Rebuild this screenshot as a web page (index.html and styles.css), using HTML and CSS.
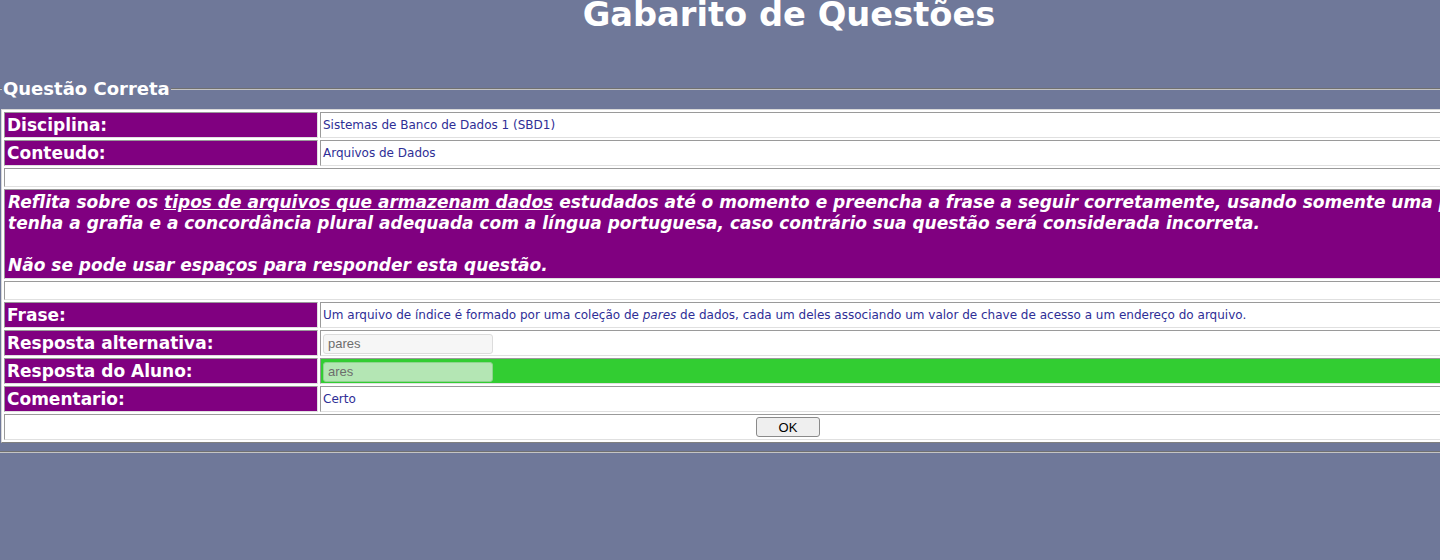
FILE: index.html
```html
<!DOCTYPE html>
<html lang="pt-BR">
<head>
<meta charset="utf-8">
<title>Gabarito de Questões</title>
<link rel="stylesheet" href="styles.css">
</head>
<body>
<div class="page">
  <h1 class="title">Gabarito de Questões</h1>
  <fieldset class="box">
    <legend class="box-legend">Questão Correta</legend>
    <table class="grid">
      <tr>
        <td class="label">Disciplina:</td>
        <td class="value">Sistemas de Banco de Dados 1 (SBD1)</td>
      </tr>
      <tr>
        <td class="label">Conteudo:</td>
        <td class="value">Arquivos de Dados</td>
      </tr>
      <tr><td class="spacer" colspan="2">&nbsp;</td></tr>
      <tr>
        <td class="statement" colspan="2">Reflita sobre os <u>tipos de arquivos que armazenam dados</u> estudados até o momento e preencha a frase a seguir corretamente, usando somente uma palavra que tenha a grafia e a concordância plural adequada com a língua portuguesa, caso contrário sua questão será considerada incorreta.<br><br>Não se pode usar espaços para responder esta questão.</td>
      </tr>
      <tr><td class="spacer" colspan="2">&nbsp;</td></tr>
      <tr>
        <td class="label">Frase:</td>
        <td class="value">Um arquivo de índice é formado por uma coleção de <i>pares</i> de dados, cada um deles associando um valor de chave de acesso a um endereço do arquivo.</td>
      </tr>
      <tr>
        <td class="label">Resposta alternativa:</td>
        <td class="value"><input class="field" type="text" value="pares" disabled></td>
      </tr>
      <tr>
        <td class="label">Resposta do Aluno:</td>
        <td class="value ok-cell"><input class="field field-ok" type="text" value="ares" disabled></td>
      </tr>
      <tr>
        <td class="label">Comentario:</td>
        <td class="value">Certo</td>
      </tr>
      <tr>
        <td class="actions" colspan="2"><button class="btn" type="button">OK</button></td>
      </tr>
    </table>
  </fieldset>
</div>
</body>
</html>
```

FILE: styles.css
```css
html, body {
  margin: 0;
  padding: 0;
  overflow: hidden;
  background: #6f7899;
}

.page {
  width: 1578px;
  font-family: "DejaVu Sans", Verdana, sans-serif;
}

.title {
  margin: -5px 0 0 0;
  text-align: center;
  color: #ffffff;
  font-size: 33.7px;
  line-height: 40px;
  font-weight: bold;
}

.box {
  margin: 44px 0 0 0;
  padding: 0 0 8px 2px;
  border: 2px groove #c4c4c4;
  border-left: none;
  border-right: none;
}

.box-legend {
  padding: 0 1px;
  margin-left: 0;
  color: #ffffff;
  font-size: 18px;
  font-weight: bold;
  line-height: 20px;
}

.grid {
  width: 1574px;
  border-collapse: separate;
  border-spacing: 2px;
  border: 1px solid;
  border-color: #d8d8d8 #808080 #808080 #d8d8d8;
  background: #ffffff;
  margin: 10px 0 0 -1px;
}

.grid td {
  border: 1px solid;
  border-color: #9a9a9a #e0e0e0 #e0e0e0 #9a9a9a;
  padding: 1px 2px;
}

.label {
  width: 308px;
  background: #800080;
  color: #ffffff;
  font-size: 17px;
  font-weight: bold;
  line-height: 22px;
}

.value {
  background: #ffffff;
  color: #2e2e96;
  font-size: 12px;
  line-height: 22px;
}

.ok-cell {
  background: #32cd32;
}

.spacer {
  background: #ffffff;
  font-size: 11px;
  line-height: 15px;
}

.statement {
  background: #800080;
  color: #ffffff;
  font-size: 17px;
  font-weight: bold;
  font-style: italic;
  line-height: 21px;
  padding: 2px 3px 2px 3px !important;
}

.field {
  width: 170px;
  height: 20px;
  box-sizing: border-box;
  margin: 0;
  padding: 0 4px;
  border: 1px solid #dcdcdc;
  border-radius: 3px;
  background: #f6f6f6;
  color: #6d6d6d;
  font-family: "Liberation Sans", Arial, sans-serif;
  font-size: 13px;
  vertical-align: middle;
}

.field-ok {
  background: #b4e6b4;
  border-color: #8fd48f;
}

.actions {
  text-align: center;
  background: #ffffff;
  height: 22px;
}

.btn {
  width: 64px;
  height: 20px;
  padding: 0;
  border: 1px solid #8a8a8a;
  border-radius: 3px;
  background: #efefef;
  color: #000000;
  font-family: "Liberation Sans", Arial, sans-serif;
  font-size: 13px;
  vertical-align: middle;
}
```
